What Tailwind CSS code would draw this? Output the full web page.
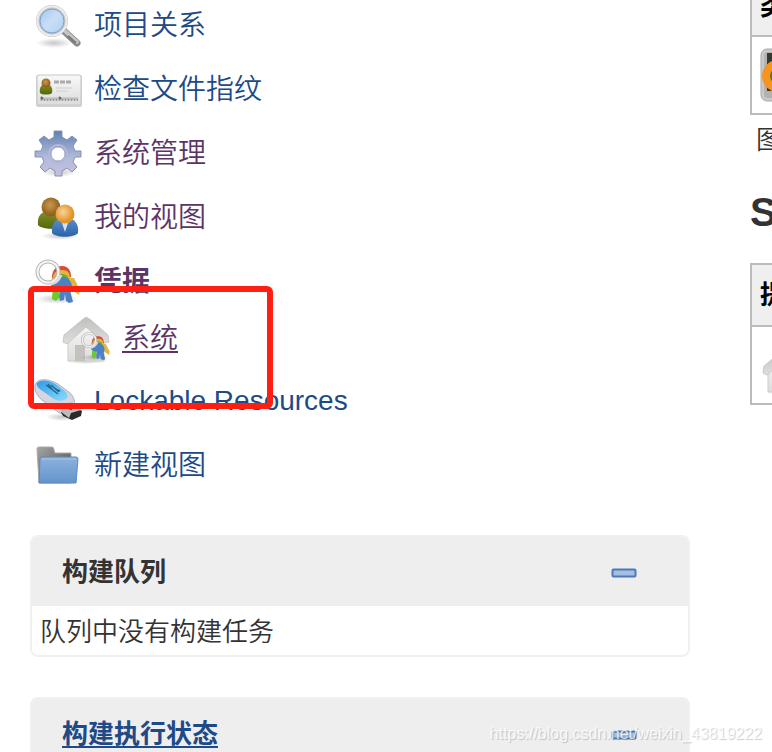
<!DOCTYPE html>
<html lang="zh-CN">
<head>
    <meta charset="utf-8">
    <meta name="viewport" content="width=device-width, initial-scale=1">
    <title>凭据 [Jenkins]</title>
    <script src="https://cdn.jsdelivr.net/npm/@tailwindcss/browser@4"></script>
</head>

<body class="relative h-screen overflow-hidden bg-white font-['Liberation_Sans','Noto_Sans_CJK_SC',sans-serif] text-[26px] font-[350] text-[#333]">

<!-- shared gradients and symbols -->
<svg class="absolute size-0" aria-hidden="true">
    <defs>
        <linearGradient id="glass" x1="0" y1="0" x2="1" y2="1"><stop offset="0" stop-color="#9fc3ee"/><stop offset=".5" stop-color="#c9dff7"/><stop offset="1" stop-color="#a9caf0"/></linearGradient>
        <linearGradient id="gear" x1="0" y1="0" x2="0" y2="1"><stop offset="0" stop-color="#5f80ae"/><stop offset=".3" stop-color="#8b9fc8"/><stop offset=".6" stop-color="#b3bbdb"/><stop offset="1" stop-color="#c6bfde"/></linearGradient>
        <linearGradient id="silver" x1="0" y1="0" x2="0" y2="1"><stop offset="0" stop-color="#f8f8f8"/><stop offset="1" stop-color="#dcdcdc"/></linearGradient>
        <linearGradient id="roof" x1="0" y1="0" x2="0" y2="1"><stop offset="0" stop-color="#c0c0be"/><stop offset="1" stop-color="#dededc"/></linearGradient>
        <linearGradient id="folder" x1="0" y1="0" x2="0" y2="1"><stop offset="0" stop-color="#8db2dd"/><stop offset="1" stop-color="#6494cc"/></linearGradient>
        <linearGradient id="folderback" x1="0" y1="0" x2="1" y2="1"><stop offset="0" stop-color="#a5a5a3"/><stop offset=".6" stop-color="#6c6c6c"/><stop offset="1" stop-color="#999"/></linearGradient>
        <radialGradient id="brown" cx=".45" cy=".4"><stop offset="0" stop-color="#c99a55"/><stop offset="1" stop-color="#94611c"/></radialGradient>
        <radialGradient id="orange" cx=".4" cy=".4"><stop offset="0" stop-color="#f9d3a0"/><stop offset="1" stop-color="#e29527"/></radialGradient>
        <linearGradient id="green" x1="0" y1="0" x2="0" y2="1"><stop offset="0" stop-color="#83922a"/><stop offset="1" stop-color="#526708"/></linearGradient>
        <linearGradient id="blue" x1="0" y1="0" x2="0" y2="1"><stop offset="0" stop-color="#5b8fce"/><stop offset="1" stop-color="#2b62a8"/></linearGradient>
        <linearGradient id="lcd" x1="0" y1="0" x2="1" y2="1"><stop offset="0" stop-color="#2d9be8"/><stop offset="1" stop-color="#8bdcfb"/></linearGradient>
        <radialGradient id="shadow"><stop offset="0" stop-color="#000" stop-opacity=".22"/><stop offset="1" stop-color="#000" stop-opacity="0"/></radialGradient>
        <symbol id="keys" viewBox="0 0 48 48">
            <ellipse cx="23" cy="41" rx="22" ry="5" fill="url(#shadow)"/>
            <path d="M34 20l4 12 7 5 1-5-6-12z" fill="#e0b83f"/>
            <path d="M19 27l-1 14 4 2 3-3 1-15z" fill="#6ccb2c"/>
            <path d="M18 20c0-8 4-12 10-12s9 4 9 11l-5 2-9 4z" fill="#d94b35"/>
            <path d="M18 23c1-8 4-11 10-11s8 3 8 9l-7 4z" fill="#e8b43a"/>
            <path d="M18 26c1-7 4-10 9-10s7 2 8 6l-7 5z" fill="#62ac38"/>
            <path d="M17 28c1-6 5-9 10-9 7 0 11 4 11 10 0 3-2 4-1 7l2 8-4 1-3-2-1-7-1 6-4 1-1-5 1-6c-4 0-7-2-9-4z" fill="#4c82c4"/>
            <circle cx="14" cy="14" r="10.500" fill="none" stroke="#b4b4b4" stroke-width="4"/>
            <circle cx="14" cy="14" r="10.500" fill="none" stroke="#f4f4f4" stroke-width="2"/>
            <path d="M15 26c7 0 10-4 12-9" fill="none" stroke="#ddd" stroke-width="3"/>
        </symbol>
        <symbol id="house" viewBox="0 0 48 48">
            <ellipse cx="24" cy="45" rx="21" ry="3" fill="url(#shadow)"/>
            <path d="M6 24L24 8l18 16v21H6z" fill="url(#silver)" stroke="#cdcdcb"/>
            <path d="M13 29h10v16H13z" fill="#c3c2bd"/>
            <path d="M24 1l5 3 17 15 1 7-5 1L24 11 5 28l-4-2 1-7L20 4z" fill="url(#roof)" stroke="#c0c0be" stroke-width=".8"/>
        </symbol>
    </defs>
</svg>

<div class="flex items-start gap-[60px] pl-[30px]">
    <aside class="w-[660px] shrink-0 pt-0.5">
        <nav class="pl-1">
            <ul class="flex flex-col gap-4 text-[28px] leading-[48px] text-[#204a87]">
                <li>
                    <a href="#" class="flex h-12 gap-3">
                        <svg class="size-12" viewBox="0 0 48 48" aria-hidden="true">
                            <ellipse cx="20" cy="41" rx="18" ry="5" fill="url(#shadow)"/>
                            <path d="M30 29l13 12" stroke="#888" stroke-width="7" stroke-linecap="round"/>
                            <path d="M31 29l12 11" stroke="#c4c4c4" stroke-width="4" stroke-linecap="round"/>
                            <path d="M34 34l8 7" stroke="#777" stroke-width="2"/>
                            <circle cx="18" cy="19" r="14" fill="url(#glass)" stroke="#c4c4c4" stroke-width="4"/>
                            <circle cx="18" cy="19" r="14.500" fill="none" stroke="#ededed" stroke-width="2"/>
                            <circle cx="18" cy="19" r="12" fill="none" stroke="#7e9fce"/>
                        </svg>
                        项目关系
                    </a>
                </li>
                <li>
                    <a href="#" class="flex h-12 gap-3">
                        <svg class="size-12" viewBox="0 0 48 48" aria-hidden="true">
                            <rect x="2" y="9" width="46" height="32" rx="2" fill="#d4d4d4"/>
                            <rect x="3" y="9" width="44" height="30" rx="2" fill="url(#silver)" stroke="#c6c6c6"/>
                            <path d="M6 27c-1-5 1-9 6-9s7 4 6 9c-2 2-10 2-12 0z" fill="url(#green)"/>
                            <circle cx="12" cy="17" r="4.500" fill="url(#brown)"/>
                            <path d="M20 16h18" stroke="#aaa" stroke-width="3" stroke-dasharray="5 1"/>
                            <path d="M22 22h16M22 25h12" stroke="#d0d0d0"/>
                            <path d="M6 33h38" stroke="#bbb" stroke-width="3"/>
                            <path d="M7 34h37" stroke="#999" stroke-width="2" stroke-dasharray="1 2"/>
                            <path d="M7 31l2 2M25 31l2 2" stroke="#666" stroke-width="2"/>
                        </svg>
                        检查文件指纹
                    </a>
                </li>
                <li>
                    <a href="#" class="flex h-12 gap-3 text-[#5c3566]">
                        <svg class="size-12" viewBox="0 0 48 48" aria-hidden="true">
                            <ellipse cx="25" cy="42" rx="18" ry="5" fill="url(#shadow)"/>
                            <path fill-rule="evenodd" d="M20 1h8v6l5 3 5-4 5 4-4 6 2 5h6v6h-6l-2 5 4 5-5 5-5-4-5 3v5h-7v-5l-5-3-5 4-5-5 4-5-2-5H1v-6h6l2-5-4-6 5-4 5 4 5-3zM24 17a7 7 0 1 0 0 14 7 7 0 0 0 0-14z" fill="url(#gear)" stroke="#8592b8" stroke-linejoin="round"/>
                            <circle cx="24" cy="24" r="9" fill="none" stroke="#b3bad8" stroke-width="2"/>
                            <circle cx="24" cy="24" r="7" fill="#fff" stroke="#a5aecb"/>
                        </svg>
                        系统管理
                    </a>
                </li>
                <li>
                    <a href="#" class="flex h-12 gap-3 text-[#5c3566]">
                        <svg class="size-12" viewBox="0 0 48 48" aria-hidden="true">
                            <ellipse cx="26" cy="42" rx="19" ry="4" fill="url(#shadow)"/>
                            <path d="M4 31c-1-9 3-14 12-14s14 4 14 14c-4 5-22 5-26 0z" fill="url(#green)"/>
                            <circle cx="17" cy="13" r="9.500" fill="url(#brown)"/>
                            <path d="M18 39c-1-9 3-15 13-15s14 6 13 15c-4 5-22 5-26 0z" fill="url(#blue)"/>
                            <path d="M27 26l4 12 4-12z" fill="#d5e2f1"/>
                            <circle cx="31" cy="20" r="9.500" fill="url(#orange)"/>
                        </svg>
                        我的视图
                    </a>
                </li>
                <li class="text-[#5c3566]">
                    <a href="#" class="flex h-12 gap-3 font-bold">
                        <svg class="size-12" aria-hidden="true"><use href="#keys"/></svg>
                        凭据
                    </a>
                    <ul class="pt-2.5 pl-7">
                        <li>
                            <a href="#" class="flex h-[46px] gap-3 leading-[46px] underline decoration-2 underline-offset-3">
                                <svg class="size-12" viewBox="0 0 48 48" aria-hidden="true">
                                    <use href="#house" width="48" height="48"/>
                                    <use href="#keys" x="18" y="15" width="31" height="31"/>
                                </svg>
                                系统
                            </a>
                        </li>
                    </ul>
                </li>
                <li>
                    <a href="#" class="flex h-12 gap-3 leading-[46px]">
                        <svg class="size-12" viewBox="0 0 48 48" aria-hidden="true">
                            <ellipse cx="28" cy="39" rx="16" ry="4" fill="url(#shadow)"/>
                            <path d="M2 5C5 0 15 1 24 6l12 9c4 4 5 8 4 12l-8 8c-3 1-5 1-8-1L8 22C2 17-1 10 2 5z" fill="#d6d6e0" stroke="#aeaebb"/>
                            <path d="M3 5c4-4 13-3 20 2l9 7c3 3 2 7-2 8-5 2-9 0-13-3L7 12C4 10 2 7 3 5z" fill="url(#lcd)"/>
                            <path d="M12 7l12 9M14 6l4 5m-1-4l8 7m-4-3l5 2" stroke="#24668f" stroke-width="1.500"/>
                            <path d="M27 34l2 4 9 4 9-4 1-5-8-5z" fill="#2b2b2b"/>
                            <path d="M26 33l6-7 5-2 10 8-10 3-2 5z" fill="#bdbdbd"/>
                            <path d="M34 30l4 1m0-3l4 2" stroke="#333" stroke-width="2"/>
                        </svg>
                        Lockable Resources
                    </a>
                </li>
                <li>
                    <a href="#" class="flex h-12 gap-3">
                        <svg class="size-12" viewBox="0 0 48 48" aria-hidden="true">
                            <path d="M3 7q0-2 2-2h13q2 0 2 3l1 3h16v30H5z" fill="url(#folderback)" stroke="#aaa"/>
                            <path d="M8 15h34q2 0 2 2l-2 24H5l1-24q0-2 2-2z" fill="url(#folder)" stroke="#5d8ac2"/>
                            <path d="M8 17h34" stroke="#a8c5e6"/>
                        </svg>
                        新建视图
                    </a>
                </li>
            </ul>
        </nav>

        <section class="mt-[45px] rounded-lg border-2 border-[#f0f0f0]">
            <header class="flex h-[69px] items-center justify-between rounded-t-md bg-[#eee] pr-[51px] pl-[30px]">
                <h2 class="pt-0.5 font-bold">构建队列</h2>
                <button type="button" aria-label="收起构建队列" class="pt-3 pb-2.5">
                    <svg class="h-2.5 w-[26px]" viewBox="0 0 26 10"><rect x="1.500" y="1.500" width="23" height="7" rx="1" fill="#a3c0e4" stroke="#4a7ab8" stroke-width="2"/></svg>
                </button>
            </header>
            <p class="px-2 pt-2 pb-[5px] leading-9">队列中没有构建任务</p>
        </section>

        <section class="mt-10 rounded-lg border-2 border-[#f0f0f0]">
            <header class="flex h-[69px] items-center justify-between rounded-t-md bg-[#eee] pr-[51px] pl-[30px]">
                <h2 class="pt-0.5 font-bold"><a href="#" class="text-[#204a87] underline decoration-2 underline-offset-3">构建执行状态</a></h2>
                <button type="button" aria-label="收起构建执行状态" class="pt-3 pb-2.5">
                    <svg class="h-2.5 w-[26px]" viewBox="0 0 26 10"><rect x="1.500" y="1.500" width="23" height="7" rx="1" fill="#a3c0e4" stroke="#4a7ab8" stroke-width="2"/></svg>
                </button>
            </header>
        </section>
    </aside>

    <main class="min-w-0 flex-1 overflow-hidden whitespace-nowrap">
        <table class="-mt-[29px] border-collapse border-2 border-[#bbb]">
            <thead>
                <tr class="h-[64px] border-2 border-[#bbb] bg-[#efefef] text-black"><th class="px-2 pt-1">类型</th></tr>
            </thead>
            <tbody>
                <tr class="h-[78px]">
                    <td class="px-2">
                        <svg class="h-[54px] w-12" viewBox="0 0 48 54" role="img" aria-label="凭据">
                            <rect x="1" y="1" width="46" height="52" rx="6" fill="#c9c9c9" stroke="#a9a9a9"/>
                            <rect x="4" y="4" width="40" height="46" rx="4" fill="#b2b2ae"/>
                            <rect x="7" y="5" width="34" height="38" fill="#353a2e"/>
                            <circle cx="18" cy="28" r="12" fill="#55772e" stroke="#f79420" stroke-width="8"/>
                        </svg>
                    </td>
                </tr>
            </tbody>
        </table>
        <p class="mt-1.5 pl-1.5">图标:</p>
        <h1 class="mt-[22px] text-[40px] font-bold">Stores scoped to Jenkins</h1>
        <table class="mt-[21px] border-collapse border-2 border-[#bbb]">
            <thead>
                <tr class="h-[62px] border-2 border-[#bbb] bg-[#efefef] text-black"><th class="px-2">提供者</th></tr>
            </thead>
            <tbody>
                <tr class="h-[78px]">
                    <td class="px-2.5 pt-3"><svg class="size-12" role="img" aria-label="Jenkins"><use href="#house"/></svg></td>
                </tr>
            </tbody>
        </table>
    </main>
</div>

<!-- highlight frame around the "系统" entry -->
<div class="pointer-events-none absolute top-[286px] left-7 h-[123px] w-[245px] rounded-md border-6 border-[#ff1e12]"></div>

<p class="pointer-events-none absolute right-2.5 bottom-2 text-base leading-5 text-white/80 [text-shadow:1px_1px_1px_#0003]">https://blog.csdn.net/weixin_43819222</p>
</body>
</html>
